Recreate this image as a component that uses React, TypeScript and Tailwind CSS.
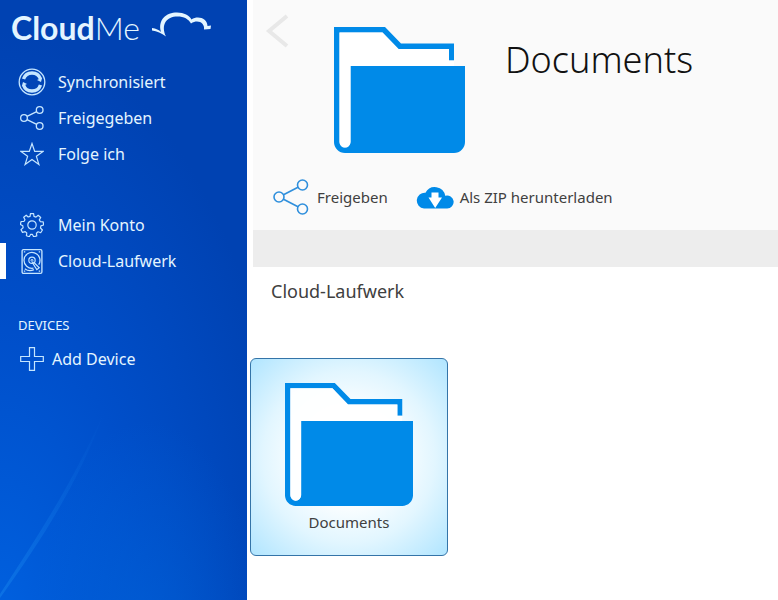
import React, { useState } from 'react';

type IconProps = { className?: string };

const LogoCloud: React.FC<IconProps> = ({ className }) => (
  <svg viewBox="0 0 60 26" className={className} fill="currentColor" aria-hidden="true">
    <path d="M0 16C4 16.500 7 18 9 20C5.500 8 14 0.500 25 0.500C32 0.500 37.500 3.500 39.500 7.500C46 3 55.500 6.500 55.500 14L59 13.500L58.500 17L52 17.500C53 11 46 7 39 11.500C36.500 7 32 4.400 25.500 4.400C14.500 4.400 8.500 12.500 14 24.500C9.500 21.500 5 19 0 18.500Z" />
  </svg>
);

const SyncIcon: React.FC<IconProps> = ({ className }) => (
  <svg viewBox="0 0 28 28" className={className} fill="none" stroke="currentColor" aria-hidden="true">
    <circle cx="14" cy="14" r="12.800" strokeWidth="1.300" />
    <path d="M5.500 11A9 9 0 0 1 22.500 11" strokeWidth="3.400" />
    <path d="M22.500 17A9 9 0 0 1 5.500 17" strokeWidth="3.400" />
    <path d="M24.200 9.500L23 14L19 12Z" fill="currentColor" stroke="none" />
    <path d="M3.800 18.500L5 14L9 16Z" fill="currentColor" stroke="none" />
  </svg>
);

const ShareIcon: React.FC<IconProps> = ({ className }) => (
  <svg viewBox="0 0 36 36" className={className} fill="none" stroke="currentColor" aria-hidden="true">
    <circle cx="6" cy="18" r="5" />
    <circle cx="29.500" cy="6" r="5" />
    <circle cx="29.500" cy="30" r="5" />
    <path d="M10.500 15.700L25 8.300M10.500 20.300L25 27.700" />
  </svg>
);

const StarIcon: React.FC<IconProps> = ({ className }) => (
  <svg viewBox="0 0 24 24" className={className} fill="none" stroke="currentColor" strokeWidth="1.200" aria-hidden="true">
    <path d="M12 1.500L14.700 9.400H23L16.400 14.300L18.900 22.500L12 17.500L5.100 22.500L7.600 14.300L1 9.400H9.300Z" />
  </svg>
);

const GearIcon: React.FC<IconProps> = ({ className }) => (
  <svg viewBox="0 0 24 24" className={className} fill="none" stroke="currentColor" strokeWidth="1.200" strokeLinejoin="round" aria-hidden="true">
    <circle cx="12" cy="12" r="4.200" />
    <path d="M10.400 0.700H13.600L14 3.400L16 4.100L18.200 2.300L20.700 4.500L19.300 6.900L20.400 8.700L23.200 8.800L23.600 12L20.900 12.800L20.500 15L22.400 17L20.700 19.700L18.100 18.800L16.400 20.200L16.800 22.900L13.700 23.800L12.300 21.300H10.700L9.300 23.700L6.400 22.700L6.800 20L5.200 18.600L2.500 19.400L1 16.600L3.100 14.800L2.800 12.800L0.400 11.400L1.100 8.500H3.900L5 6.700L3.700 4.200L6.200 2.200L8.200 4L10.100 3.400Z" />
  </svg>
);

const DriveIcon: React.FC<IconProps> = ({ className }) => (
  <svg viewBox="0 0 22 26" className={className} fill="none" stroke="currentColor" aria-hidden="true">
    <rect x="0.700" y="0.700" width="20.600" height="24.600" rx="1.500" strokeWidth="1.400" />
    <path d="M12.500 20A8.300 8.300 0 1 1 18 16.300M3.500 20.500C6 22.500 10 23 13 21.500" strokeWidth="1.300" />
    <circle cx="11" cy="11.800" r="3.300" strokeWidth="1.200" />
    <circle cx="11" cy="11.800" r="1" strokeWidth="1" />
    <path d="M11 13.500L16 21.500L18.500 19.500L12.500 13.500" strokeWidth="1.200" />
    <path d="M2.500 3H4M18 3H19.500M2.500 23H4M18 23H19.500" strokeWidth="1.200" />
  </svg>
);

const PlusIcon: React.FC<IconProps> = ({ className }) => (
  <svg viewBox="0 0 24 24" className={className} fill="none" stroke="currentColor" strokeWidth="1.200" aria-hidden="true">
    <path d="M9.500 0.700H14.500V9.500H23.300V14.500H14.500V23.300H9.500V14.500H0.700V9.500H9.500Z" />
  </svg>
);

const FolderIcon: React.FC<IconProps> = ({ className }) => (
  <svg viewBox="0 0 131 126" preserveAspectRatio="none" className={className} aria-hidden="true">
    <path
      d="M0 0H51L67 16.500H120V33.500H115V22H64.500L48.500 5.500H5.500V115A5.500 5.500 0 0 0 16.500 115V39H131V115A11 11 0 0 1 120 126H11A11 11 0 0 1 0 115Z"
      fill="#008ae8"
    />
    <path d="M5.500 5.500H48.500L64.500 22H115V33.500H120V39H16.500V115A5.500 5.500 0 0 1 5.500 115Z" fill="white" fillOpacity="0.900" />
  </svg>
);

const CloudDownloadIcon: React.FC<IconProps> = ({ className }) => (
  <svg viewBox="0 0 38 24" className={className} aria-hidden="true">
    <path d="M8 23.500A7.800 7.800 0 0 1 9.500 7.700A10.500 10.500 0 0 1 29.200 10.800A6.500 6.500 0 1 1 31 23.500Z" fill="#008ae8" />
    <path d="M15.500 7.500H22.500V12.500H26L19.200 23L12.500 12.500H15.500Z" fill="white" />
  </svg>
);

const BackIcon: React.FC<IconProps> = ({ className }) => (
  <svg viewBox="0 0 24 34" className={className} fill="none" stroke="currentColor" strokeWidth="4" aria-hidden="true">
    <path d="M22 2L4 17L22 32" />
  </svg>
);

// Faint light ray over the sidebar sky
const LightRay: React.FC<IconProps> = ({ className }) => (
  <svg viewBox="0 0 120 200" className={className} aria-hidden="true">
    <defs>
      <linearGradient id="ray" x1="0" y1="1" x2="1" y2="0">
        <stop offset="0" stopColor="#1c8cf0" stopOpacity="0.400" />
        <stop offset="1" stopColor="#1c8cf0" stopOpacity="0" />
      </linearGradient>
    </defs>
    <path d="M0 194C35 140 72 85 105 10C78 85 40 142 0 198Z" fill="url(#ray)" />
  </svg>
);

type NavItem = { id: string; label: string; icon: React.FC<IconProps>; size: string };

const mainItems: NavItem[] = [
  { id: 'sync', label: 'Synchronisiert', icon: SyncIcon, size: 'w-7 h-7' },
  { id: 'shared', label: 'Freigegeben', icon: ShareIcon, size: 'w-6 h-6 stroke-2' },
  { id: 'following', label: 'Folge ich', icon: StarIcon, size: 'w-6 h-6' },
];

const accountItems: NavItem[] = [
  { id: 'account', label: 'Mein Konto', icon: GearIcon, size: 'w-6 h-6' },
  { id: 'drive', label: 'Cloud-Laufwerk', icon: DriveIcon, size: 'w-6 h-[25px]' },
];

export default function App() {
  const [active, setActive] = useState<string>('drive');

  const renderItem = ({ id, label, icon: Icon, size }: NavItem) => (
    <li key={id}>
      <button
        onClick={() => setActive(id)}
        className={`w-full h-9 flex items-center border-l-6 text-left text-base ${
          active === id ? 'border-white' : 'border-transparent'
        }`}
      >
        <span className="w-13 flex justify-center shrink-0">
          <Icon className={`${size} text-[#c5e6ff]`} />
        </span>
        <span>{label}</span>
      </button>
    </li>
  );

  return (
    <div className="min-h-screen flex bg-white font-['Noto_Sans',sans-serif] text-[#404040]">
      {/* Sidebar */}
      <aside className="relative w-[247px] shrink-0 text-[#e4f5ff] bg-[radial-gradient(ellipse_200px_400px_at_60%_110%,#0068dc80_0%,transparent_60%),radial-gradient(ellipse_300px_600px_at_0%_105%,#0061e0_0%,#004fca_50%,#0042b2_100%)]">
        <LightRay className="absolute left-0 bottom-0 w-[120px] h-[200px] pointer-events-none" />

        <a href="#" className="h-16 pl-[11px] pt-2 flex items-start gap-3 font-['Lato',sans-serif]">
          <span className="text-[32px] leading-10">
            <span className="font-bold">Cloud</span>
            <span className="font-light">Me</span>
          </span>
          <LogoCloud className="w-15 h-[26px] mt-1" />
        </a>

        <nav>
          <ul>{mainItems.map(renderItem)}</ul>
          <ul className="mt-[35px]">{accountItems.map(renderItem)}</ul>
        </nav>

        <h2 className="mt-[34px] pl-[18px] text-[13px] leading-6">DEVICES</h2>
        <button className="mt-1 pl-5 h-9 flex items-center gap-2 text-base">
          <PlusIcon className="w-6 h-6 text-[#c5e6ff]" />
          <span>Add Device</span>
        </button>
      </aside>

      {/* Content */}
      <main className="flex-1 min-w-0">
        <header className="ml-1.5 h-[230px] bg-[#fafafa]">
          <div className="h-[170px] flex items-start">
            <button aria-label="Zurück" className="mt-3.5 ml-3 w-6 text-[#e8e8e8]">
              <BackIcon className="w-6 h-[34px]" />
            </button>
            <FolderIcon className="mt-[27px] ml-[45px] w-[131px] h-[126px] shrink-0" />
            <h1 className="mt-8 ml-10 text-4xl leading-14 font-light text-[#111111]">Documents</h1>
          </div>
          <div className="pl-5 h-[54px] flex items-center gap-7 text-[15px]">
            <button className="flex items-center gap-2">
              <ShareIcon className="w-9 h-9 stroke-[1.6] text-[#2f8fdc]" />
              <span>Freigeben</span>
            </button>
            <button className="flex items-center gap-1.5">
              <CloudDownloadIcon className="w-[38px] h-6" />
              <span>Als ZIP herunterladen</span>
            </button>
          </div>
        </header>
        <div className="ml-1.5 h-[37px] bg-[#ededed]" />

        <h2 className="h-[91px] pl-6 pt-2 text-lg leading-8">Cloud-Laufwerk</h2>

        <div className="pl-[3px]">
          <button className="w-[198px] h-[198px] rounded-md border border-[#3474a8] bg-[radial-gradient(circle,#ffffff_30%,#e2f6ff_62%,#b0e5ff_100%)] flex flex-col items-center pt-6">
            <FolderIcon className="w-32 h-[123px]" />
            <span className="mt-1 text-[15px] leading-6">Documents</span>
          </button>
        </div>
      </main>
    </div>
  );
}
